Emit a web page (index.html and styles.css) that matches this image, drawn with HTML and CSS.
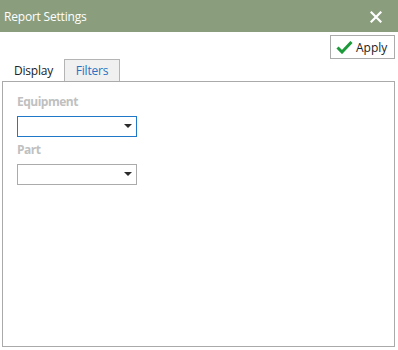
FILE: index.html
```html
<!DOCTYPE html>
<html>
<head>
<meta charset="utf-8">
<link rel="stylesheet" href="styles.css">
</head>
<body>
<div class="window">
  <div class="titlebar">
    <span class="title">Report Settings</span>
    <svg class="close" width="12" height="12" viewBox="0 0 12 12"><path d="M1.5 1.5 L10.5 10.5 M10.5 1.5 L1.5 10.5" stroke="#fff" stroke-width="2.2" stroke-linecap="square"/></svg>
  </div>
  <div class="toolbar">
    <button class="apply">
      <svg width="17" height="14" viewBox="0 0 17 14"><path d="M1.5 7.5 L6 12 L15.5 2" fill="none" stroke="#1c9a3a" stroke-width="3"/></svg>
      <span>Apply</span>
    </button>
  </div>
  <div class="tabs">
    <div class="tab first">Display</div>
    <div class="tab active">Filters</div>
  </div>
  <div class="panel">
    <div class="field">
      <div class="label">Equipment</div>
      <div class="select focused"><span class="arrow"></span></div>
    </div>
    <div class="field">
      <div class="label">Part</div>
      <div class="select"><span class="arrow"></span></div>
    </div>
  </div>
</div>
</body>
</html>
```
FILE: styles.css
```css
html, body {
  margin: 0;
  padding: 0;
  background: #fff;
}
body {
  font-family: "Open Sans", "Noto Sans", sans-serif;
  font-size: 12px;
  color: #222;
}
.window {
  width: 398px;
  height: 350px;
  display: flex;
  flex-direction: column;
}
.titlebar {
  height: 32px;
  background: #8a9e7e;
  display: flex;
  align-items: center;
  justify-content: space-between;
  padding: 0 16px 0 4px;
  color: #fff;
  box-sizing: border-box;
}
.title {
  font-size: 12px;
  letter-spacing: -0.2px;
}
.close {
  display: block;
  margin-top: 1px;
}
.toolbar {
  display: flex;
  justify-content: flex-end;
  padding: 3px 3px 0 0;
}
.apply {
  width: 65px;
  height: 24px;
  border: 1px solid #ababab;
  background: #fff;
  display: flex;
  align-items: center;
  gap: 3px;
  padding: 0 0 0 5px;
  font-family: inherit;
  font-size: 12px;
  color: #222;
  box-sizing: border-box;
}
.apply svg { display: block; }
.tabs {
  display: flex;
  padding-left: 4px;
  height: 22px;
}
.tab {
  line-height: 21px;
  color: #222;
  border: 1px solid transparent;
  border-bottom: none;
  box-sizing: border-box;
  letter-spacing: -0.2px;
}
.tab.first {
  width: 60px;
  padding-left: 9px;
}
.tab.active {
  width: 56px;
  text-align: center;
  background: #f0f0f0;
  border-color: #b4b4b4;
  color: #2a72c4;
}
.panel {
  margin: 0 3px 0 2px;
  height: 266px;
  border: 1px solid #aaaaaa;
  box-sizing: border-box;
  padding: 11px 0 0 14px;
}
.field {
  margin-bottom: 4px;
}
.label {
  font-weight: 700;
  color: #c0c0c0;
  font-size: 12px;
  line-height: 18px;
  letter-spacing: -0.5px;
  margin-bottom: 5px;
}
.select {
  width: 120px;
  height: 21px;
  border: 1px solid #ababab;
  box-sizing: border-box;
  position: relative;
  background: #fff;
}
.select.focused {
  border-color: #1f78c8;
}
.arrow {
  position: absolute;
  right: 4px;
  top: 7px;
  width: 0;
  height: 0;
  border-left: 4px solid transparent;
  border-right: 4px solid transparent;
  border-top: 4px solid #2b2b2b;
}
```
